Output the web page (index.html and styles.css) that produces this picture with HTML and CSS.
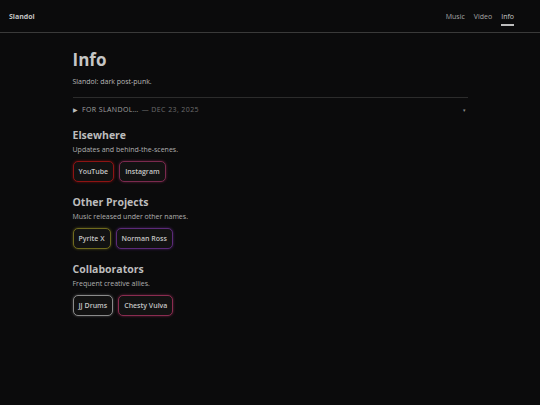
FILE: index.html
```html
<!DOCTYPE html>
<html lang="en">
<head>
<meta charset="utf-8">
<title>Info — Slandol</title>
<link rel="stylesheet" href="styles.css">
</head>
<body>
<header class="site-header">
  <a class="brand" href="#">Slandol</a>
  <nav class="nav">
    <a href="#">Music</a>
    <a href="#">Video</a>
    <a href="#" class="active">Info</a>
  </nav>
</header>
<main class="page">
  <h1 class="title">Info</h1>
  <p class="lead">Slandol: dark post-punk.</p>
  <div class="rule"></div>
  <div class="summary">
    <span class="caret">▶</span>
    <span class="sum-title">FOR SLANDOL…</span>
    <span class="sum-date">— DEC 23, 2025</span>
    <span class="sum-toggle">▾</span>
  </div>

  <section class="group">
    <h2>Elsewhere</h2>
    <p class="desc">Updates and behind-the-scenes.</p>
    <div class="chips">
      <a class="chip red" href="#">YouTube</a>
      <a class="chip pink" href="#">Instagram</a>
    </div>
  </section>

  <section class="group">
    <h2>Other Projects</h2>
    <p class="desc">Music released under other names.</p>
    <div class="chips">
      <a class="chip olive" href="#">Pyrite X</a>
      <a class="chip purple" href="#">Norman Ross</a>
    </div>
  </section>

  <section class="group">
    <h2>Collaborators</h2>
    <p class="desc">Frequent creative allies.</p>
    <div class="chips">
      <a class="chip grey" href="#">JJ Drums</a>
      <a class="chip rose" href="#">Chesty Vulva</a>
    </div>
  </section>
</main>
</body>
</html>
```
FILE: styles.css
```css
html, body {
  margin: 0;
  padding: 0;
}
body {
  background: #0b0b0c;
  color: #b4b4b4;
  font-family: "Open Sans", "Noto Sans", sans-serif;
  min-height: 405px;
}
a { text-decoration: none; color: inherit; }

.site-header {
  height: 33px;
  box-sizing: border-box;
  border-bottom: 1px solid #3a3a3a;
  display: flex;
  align-items: center;
  justify-content: space-between;
  padding: 0 26px 0 9px;
}
.brand {
  font-size: 7px;
  font-weight: 700;
  color: #c4c4c4;
}
.nav {
  display: flex;
  gap: 9px;
  font-size: 7px;
  color: #a6a6a6;
}
.nav a {
  position: relative;
}
.nav a.active {
  color: #c8c8c8;
}
.nav a.active::after {
  content: "";
  position: absolute;
  left: 0;
  right: 0;
  bottom: -5px;
  height: 1.5px;
  background: #bdbdbd;
}

.page {
  width: 395px;
  margin: 0 auto;
  padding-top: 15px;
}
.title {
  margin: 0;
  font-size: 17px;
  font-weight: 700;
  color: #c6c6c6;
  line-height: 24px;
}
.lead {
  margin: 5px 0 0;
  font-size: 7px;
  line-height: 10px;
  color: #b8b8b8;
}
.rule {
  margin-top: 10px;
  border-top: 1px solid #2c2c2c;
}
.summary {
  display: flex;
  align-items: center;
  gap: 3px;
  height: 23px;
  font-size: 7px;
  letter-spacing: 0.4px;
  color: #8e8e8e;
}
.caret { font-size: 6px; color: #bdbdbd; margin-right: 1px; }
.sum-title { color: #a0a0a0; }
.sum-date { color: #6c6c6c; }
.sum-toggle { margin-left: auto; font-size: 5px; color: #8a8a8a; margin-right: 1px; }

.group {
  margin-top: 6px;
}
.group + .group { margin-top: 12px; }
.group h2 {
  margin: 0;
  font-size: 10.5px;
  line-height: 16px;
  font-weight: 700;
  color: #bdbdbd;
}
.desc {
  margin: 2px 0 0;
  font-size: 7px;
  line-height: 10px;
  color: #b0b0b0;
}
.chips {
  display: flex;
  gap: 5px;
  margin-top: 6px;
}
.chip {
  display: inline-flex;
  align-items: center;
  height: 21px;
  box-sizing: border-box;
  padding: 0 5px;
  border-radius: 5px;
  border: 1.5px solid #888;
  background: #121212;
  font-size: 7px;
  font-weight: 600;
  color: #c4c4c4;
}
.chip.red { border-color: #8e1414; box-shadow: 0 0 3px rgba(200, 20, 20, 0.5); }
.chip.pink { border-color: #7a2a4e; box-shadow: 0 0 3px rgba(190, 50, 110, 0.45); }
.chip.olive { border-color: #6f6a1e; box-shadow: 0 0 3px rgba(170, 160, 40, 0.45); }
.chip.purple { border-color: #5b2a78; box-shadow: 0 0 3px rgba(140, 60, 190, 0.45); }
.chip.grey { border-color: #8a8a8a; box-shadow: 0 0 3px rgba(200, 200, 200, 0.35); }
.chip.rose { border-color: #8a2c50; box-shadow: 0 0 3px rgba(210, 60, 120, 0.45); }
```
